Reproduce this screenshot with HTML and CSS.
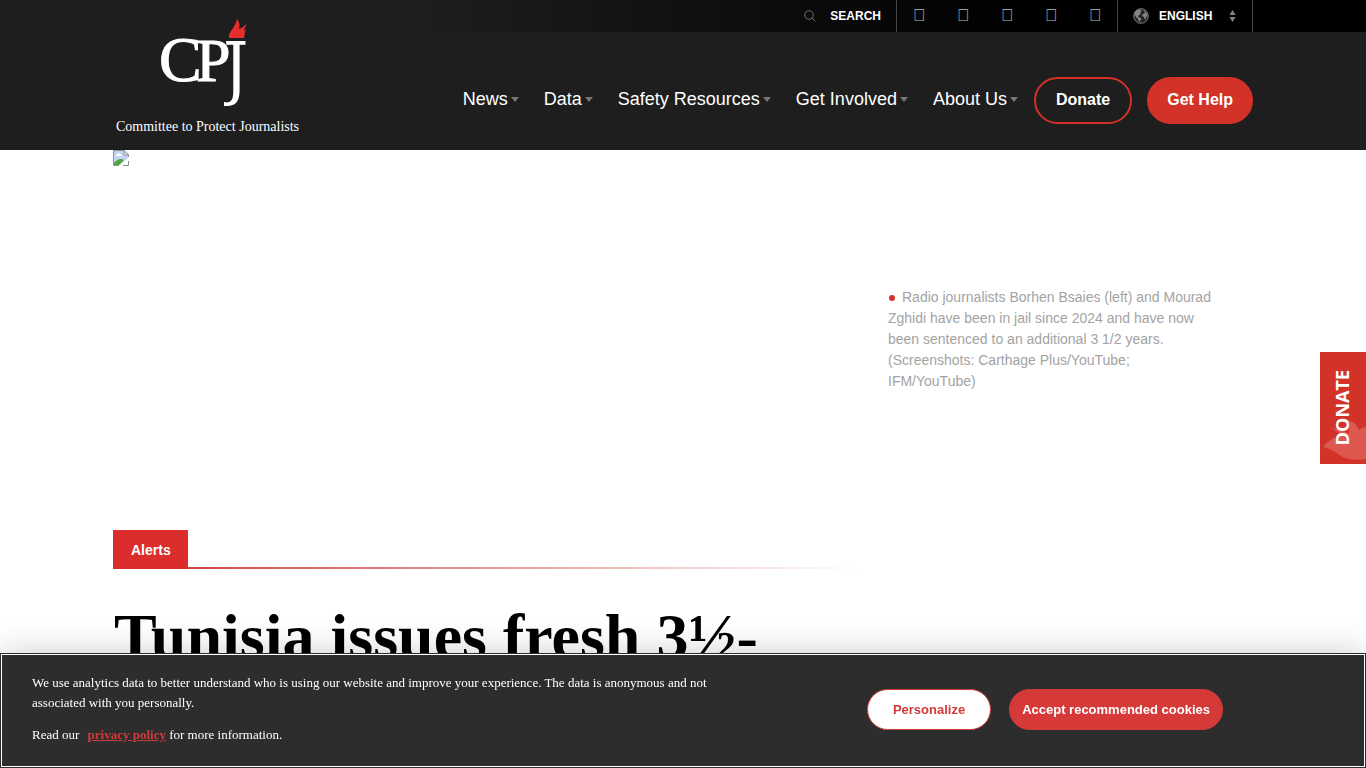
FILE: index.html
```html
<!DOCTYPE html>
<html lang="en">
<head>
<meta charset="utf-8">
<title>Committee to Protect Journalists</title>
<meta name="viewport" content="width=device-width, initial-scale=1">
<link rel="stylesheet" href="styles.css">
</head>
<body>
<header class="site-header">
  <div class="container header-inner">
    <a class="logo" href="#">
      <svg class="logo-mark" width="90" height="96" viewBox="0 0 90 96" aria-label="CPJ">
        <clipPath id="hook"><path d="M65 10H96V96H65Z"/></clipPath>
        <text class="logo-c" x="0" y="65">C</text>
        <text class="logo-p" x="37" y="65">P</text>
        <g clip-path="url(#hook)"><text class="logo-j" x="64" y="76">J</text></g>
        <path class="flame" d="M70 22C69 16 76 12 78 3C81 7 81 10 80 13C83 12 86 10 88 7C87 10 85 13 85 15L88 13C85 16 86 19 85 22Z"/>
      </svg>
      <span class="logo-name">Committee to Protect Journalists</span>
    </a>
    <div class="header-side">
      <div class="utility">
        <a class="search" href="#">
          <svg width="12" height="12" viewBox="0 0 12 12"><circle cx="5" cy="5" r="4.3"/><path d="M8 8L11.3 11.3"/></svg>
          Search
        </a>
        <nav class="social" aria-label="Social">
          <a href="#">&#xf09a;</a><a href="#">&#xf099;</a><a href="#">&#xf16d;</a><a href="#">&#xf167;</a><a href="#">&#xf0e1;</a>
        </nav>
        <button class="language" type="button">
          <svg class="globe" width="16" height="16" viewBox="0 0 16 16"><circle cx="8" cy="8" r="7.3"/><path d="M2 4L4 2L7 1.5L9 3L7 4L8 6L6 7L5 9L8 10L8 12L6 14L5 11L3 9L1.5 7ZM10 2L13 4L14.5 7L13 10L12 12L11 9L9 8L10 6L12 5Z"/></svg>
          <span>English</span>
          <svg class="sort" width="7" height="12" viewBox="0 0 7 12"><path d="M3.5 0L6.500 5H.5ZM.5 7H6.500L3.500 12Z"/></svg>
        </button>
      </div>
      <nav class="main-nav" aria-label="Main">
        <a class="item" href="#">News</a>
        <a class="item" href="#">Data</a>
        <a class="item" href="#">Safety Resources</a>
        <a class="item" href="#">Get Involved</a>
        <a class="item" href="#">About Us</a>
        <span class="actions">
          <a class="pill outline" href="#">Donate</a>
          <a class="pill solid" href="#">Get Help</a>
        </span>
      </nav>
    </div>
  </div>
</header>

<main class="container">
  <figure class="hero">
    <div class="hero-media">
      <svg width="16" height="16" viewBox="0 0 16 16" role="img" aria-label="Photo">
        <path fill="#c3d4f2" d="M1 1H11L15 5V8L7 15H1Z"/>
        <path fill="#fff" d="M3 6Q3 4 5 4Q6 2.5 7.500 4Q9 4 9 6Z"/>
        <path fill="#4ea63c" d="M1 15V13Q6 7 11 10L6 15Z"/>
        <path fill="none" stroke="#8c929c" d="M.5 15.500V.5H11L15.500 5V7M.5 15.500H6M10 15.500H15.500V11"/>
        <path fill="#eef1f5" stroke="#8c929c" d="M11 .5V5H15.500Z"/>
      </svg>
    </div>
    <figcaption>Radio journalists Borhen Bsaies (left) and Mourad Zghidi have been in jail since 2024 and have now been sentenced to an additional 3 1/2 years. (Screenshots: Carthage Plus/YouTube; IFM/YouTube)</figcaption>
  </figure>
  <article class="story">
    <div class="category"><a href="#">Alerts</a></div>
    <h1>Tunisia issues fresh 3½-</h1>
  </article>
</main>

<a class="donate-tab" href="#">
  <svg class="tab-flame" width="46" height="52" viewBox="0 0 46 52" aria-hidden="true"><path d="M3 35Q11 25 22 24Q17 18 10 16Q23 17 29 22Q30 13 24 7Q36 9 39 18Q42 15 46 15V47Q28 50 18 42Q12 37 3 35Z"/></svg>
  <span>DONATE</span>
</a>

<section class="cookies" aria-label="Cookies">
  <div class="cookies-text">
    <p>We use analytics data to better understand who is using our website and improve your experience. The data is anonymous and not associated with you personally.</p>
    <p>Read our <a href="#">privacy policy</a> for more information.</p>
  </div>
  <div class="cookies-actions">
    <button class="personalize" type="button">Personalize</button>
    <button class="accept" type="button">Accept recommended cookies</button>
  </div>
</section>
</body>
</html>
```
FILE: styles.css
```css
* { box-sizing: border-box; }
body {
  margin: 0;
  background: #fff;
  font-family: "Liberation Sans", Arial, sans-serif;
  color: #000;
}
a { color: inherit; text-decoration: none; }
button { font: inherit; cursor: pointer; }
.container { max-width: 1140px; margin: 0 auto; }

.site-header {
  background: linear-gradient(90deg, #1e1e1e 30%, #000 75%) 0 0 / 100% 32px no-repeat #1e1e1e;
  color: #fff;
}
.header-inner { display: flex; justify-content: space-between; min-height: 150px; }
.logo { display: flex; flex-direction: column; align-items: center; min-width: 189px; padding-top: 16px; }
.logo-mark { fill: #fff; margin-right: 7px; overflow: visible; }
.logo-c, .logo-p { stroke: #fff; stroke-width: 1px; }
.logo-c { font: 64px "Liberation Serif", serif; }
.logo-p { font: 62px "Liberation Serif", serif; }
.logo-j { font: 70px "DejaVu Serif Condensed", "DejaVu Serif", serif; }
.flame { fill: #e52d2d; }
.logo-name { font: 14px/20px "Liberation Serif", serif; margin-top: 5px; }

.header-side { display: flex; flex-direction: column; align-items: flex-end; }
.utility { display: flex; height: 32px; font-size: 12px; font-weight: bold; text-transform: uppercase; }
.search { display: flex; align-items: center; gap: 14px; padding-right: 15px; border-right: 1px solid #444; }
.search svg { fill: none; stroke: #707070; }
.social { display: flex; font-size: 17px; font-weight: normal; color: #bbb; }
.social a { width: 44px; line-height: 32px; text-align: center; }
.language {
  display: flex; align-items: center; gap: 10px;
  width: 136px; padding: 0 16px 0 15px; margin: 0;
  border: solid #444; border-width: 0 1px;
  background: none; color: inherit;
  text-transform: uppercase;
}
.globe circle { fill: #222; stroke: #808080; }
.globe path, .sort { fill: #858585; }
.sort { margin-left: auto; }

.main-nav { display: flex; align-items: center; gap: 25px; margin-top: 45px; font-size: 18px; }
.item { display: flex; align-items: center; gap: 3px; margin-top: -3px; }
.item::after { content: ""; border: solid transparent; border-width: 5px 4px 0; border-top-color: #777; margin-top: 1px; }
.actions { display: flex; gap: 15px; margin-left: -9px; }
.pill { padding: 0 20px 1px; border: 2px solid #d33228; border-radius: 24px; font-size: 16px; font-weight: bold; line-height: 42px; }
.solid { background: #d33228; padding: 0 18px 1px; }

.hero { display: grid; grid-template-columns: 2fr 1fr; min-height: 380px; margin: 0; }
.hero-media svg { display: block; }
figcaption { align-self: center; padding: 0 38px 2px 15px; font-size: 14px; line-height: 21px; color: #a3a3a3; }
figcaption::before { content: ""; display: inline-block; width: 6px; height: 6px; margin: 0 7px 1px 1px; border-radius: 50%; background: #d33228; }

.story { max-width: 745px; }
.category { display: flex; background: linear-gradient(90deg, #c9342d, #fff) 0 100% / 100% 2px no-repeat; }
.category a { padding: 1px 17px 0 18px; background: #dc2d2d; color: #fff; font-size: 14px; font-weight: bold; line-height: 38px; }
h1 { margin: 32px 0 0 1px; font: bold 64px/72px "Liberation Serif", serif; }

.donate-tab {
  position: fixed; right: 0; top: 352px;
  width: 46px; height: 112px; padding-right: 3px;
  display: flex; align-items: center; justify-content: center;
  background: #d33228; color: #fff; overflow: hidden;
}
.donate-tab span { position: relative; writing-mode: vertical-rl; transform: rotate(180deg); font: bold 18px/24px "Open Sans", sans-serif; }
.tab-flame { position: absolute; right: 0; bottom: 0; fill: #dd5950; }

.cookies {
  position: fixed; left: 0; right: 0; bottom: 0;
  display: flex; align-items: center; justify-content: space-between;
  min-height: 115px; padding: 0 143px 4px 32px;
  background: #2d2d2d; color: #fff;
  outline: 1px solid #fff; outline-offset: -2px;
  box-shadow: 0 0 32px rgba(0, 0, 0, .2);
}
.cookies-text { max-width: 700px; font: 13px/20px "Liberation Serif", serif; }
.cookies p { margin: 0; }
.cookies p + p { margin-top: 12px; }
.cookies-text a { margin: 0 0 0 5px; color: #d33a3a; font-weight: bold; text-decoration: underline; }
.cookies-actions { display: flex; gap: 18px; padding-top: 2px; }
.cookies button { padding: 0 12px; border: 1px solid #d33a3a; border-radius: 21px; font-size: 13px; font-weight: bold; line-height: 39px; }
.cookies .personalize { padding: 0 25px; background: #fff; color: #d33a3a; }
.cookies .accept { background: #d63a38; color: #fff; }
```
